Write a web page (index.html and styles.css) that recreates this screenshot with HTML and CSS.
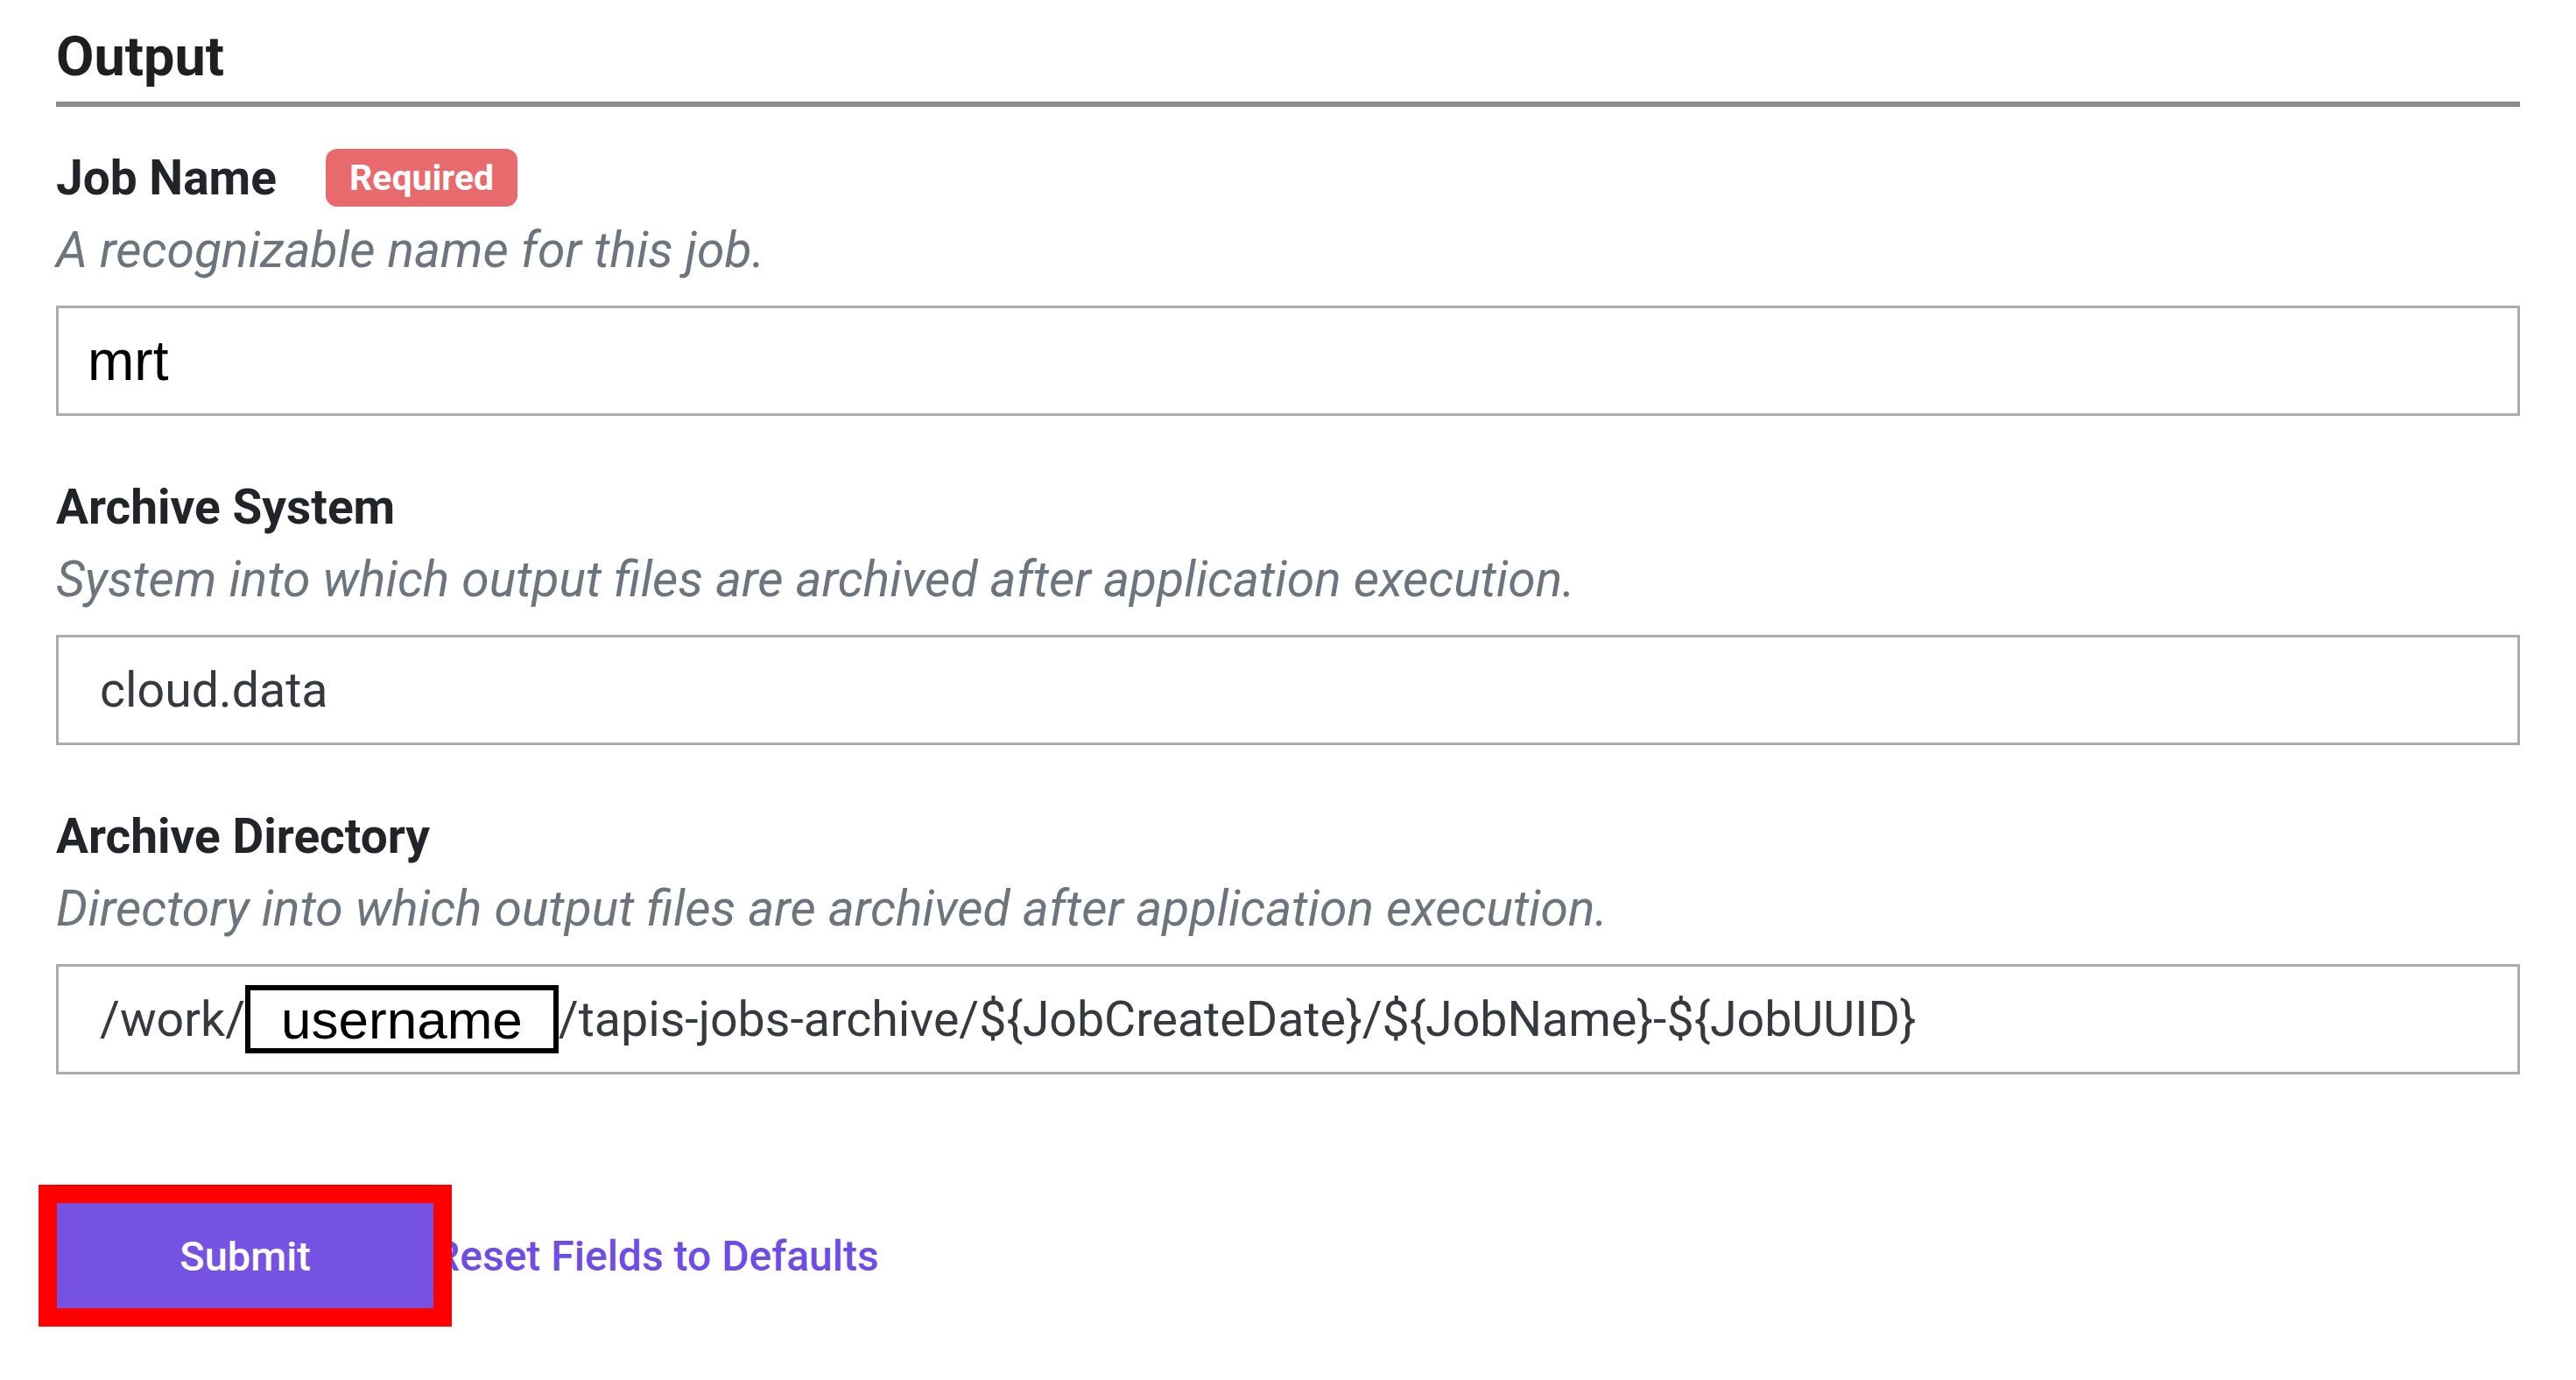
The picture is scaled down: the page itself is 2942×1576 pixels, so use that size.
FILE: index.html
```html
<!DOCTYPE html>
<html lang="en">
<head>
    <meta charset="UTF-8">
    <meta name="viewport" content="width=device-width, initial-scale=1.0">
    <title>Job Submission</title>
    <link rel="stylesheet" href="styles.css">
</head>
<body>
    <div class="job-form">
        <h2 class="section-title">Output</h2>

        <!-- Job name -->
        <div class="field">
            <div class="field-label">
                <label>Job Name</label>
                <span class="badge-required">Required</span>
            </div>
            <div class="field-help">A recognizable name for this job.</div>
            <div class="field-input field-input--edited"><span class="edited-text">mrt</span></div>
        </div>

        <!-- Archive system -->
        <div class="field">
            <div class="field-label">
                <label>Archive System</label>
            </div>
            <div class="field-help">System into which output files are archived after application execution.</div>
            <div class="field-input">cloud.data</div>
        </div>

        <!-- Archive directory -->
        <div class="field">
            <div class="field-label">
                <label>Archive Directory</label>
            </div>
            <div class="field-help">Directory into which output files are archived after application execution.</div>
            <div class="field-input">
                <span>/work/</span><span class="username-box">username</span><span>/tapis-jobs-archive/${JobCreateDate}/${JobName}-${JobUUID}</span>
            </div>
        </div>

        <div class="form-actions">
            <button type="submit" class="btn-submit">Submit</button>
            <button type="button" class="btn-reset">Reset Fields to Defaults</button>
        </div>
    </div>
</body>
</html>
```

FILE: styles.css
```css
body {
    margin: 0;
    padding: 0;
    font-family: Roboto, "Liberation Sans", Arial, sans-serif;
    background-color: #fff;
    color: #212529;
}

.job-form {
    padding: 28px 64px 80px;
}

/* Section heading with the rule under it */
.section-title {
    margin: 0;
    padding-bottom: 14px;
    font-size: 63px;
    line-height: 74px;
    font-weight: 700;
    color: #1f1f1f;
    border-bottom: 6px solid #8a8a8a;
}

.field {
    margin-top: 48px;
}

.field + .field {
    margin-top: 71px;
}

.field-label {
    display: flex;
    align-items: center;
    height: 66px;
    font-size: 55px;
    line-height: 66px;
    font-weight: 700;
}

.badge-required {
    margin-left: 56px;
    height: 66px;
    padding: 0 27px;
    border-radius: 13px;
    background-color: #e86a6c;
    color: #fff;
    font-size: 41px;
    line-height: 66px;
    font-weight: 700;
}

.field-help {
    margin-top: 17px;
    font-size: 57px;
    line-height: 66px;
    font-style: italic;
    color: #6c757d;
}

.field-input {
    display: flex;
    align-items: center;
    box-sizing: border-box;
    margin-top: 30px;
    height: 126px;
    padding: 0 47px;
    border: 3px solid #ababab;
    background-color: #fff;
    font-size: 55.5px;
    color: #343a40;
    white-space: nowrap;
}

.field-input--edited {
    padding-left: 33px;
}

.edited-text {
    font-family: "Liberation Sans", Arial, sans-serif;
    font-size: 64px;
    color: #000;
}

.username-box {
    display: flex;
    align-items: center;
    box-sizing: border-box;
    height: 78px;
    padding: 0 35px;
    border: 6px solid #000;
    background-color: #fff;
    font-family: "Liberation Sans", Arial, sans-serif;
    font-size: 62px;
    color: #000;
}

/* Buttons */
.form-actions {
    display: flex;
    align-items: center;
    margin-top: 147px;
}

.btn-submit {
    position: relative;
    width: 430px;
    height: 120px;
    margin-left: 1px;
    border: none;
    background-color: #7652e3;
    color: #fff;
    font-family: Roboto, sans-serif;
    font-size: 47px;
    font-weight: 500;
    outline: 21px solid #ff0000;
    cursor: pointer;
}

.btn-reset {
    padding: 0;
    border: none;
    background: none;
    color: #6f4ce6;
    font-family: Roboto, sans-serif;
    font-size: 48px;
    font-weight: 500;
    cursor: pointer;
}
```
